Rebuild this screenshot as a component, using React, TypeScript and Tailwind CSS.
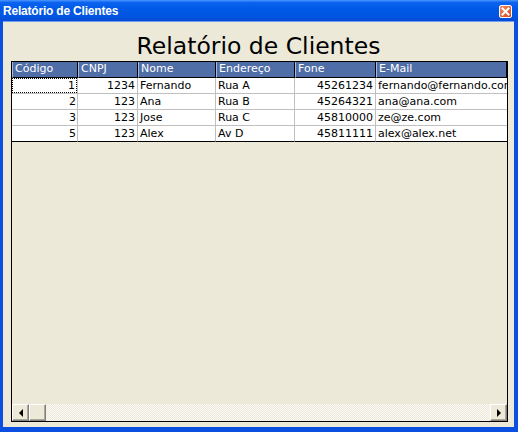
import React from 'react'

type Row = { codigo: number; cnpj: number; nome: string; endereco: string; fone: string; email: string }

const rows: Row[] = [
  { codigo: 1, cnpj: 1234, nome: 'Fernando', endereco: 'Rua A', fone: '45261234', email: 'fernando@fernando.com' },
  { codigo: 2, cnpj: 123, nome: 'Ana', endereco: 'Rua B', fone: '45264321', email: 'ana@ana.com' },
  { codigo: 3, cnpj: 123, nome: 'Jose', endereco: 'Rua C', fone: '45810000', email: 'ze@ze.com' },
  { codigo: 5, cnpj: 123, nome: 'Alex', endereco: 'Av D', fone: '45811111', email: 'alex@alex.net' },
]

const headers = [
  { label: 'Código', w: 'w-[66px]' },
  { label: 'CNPJ', w: 'w-[60px]' },
  { label: 'Nome', w: 'w-[78px]' },
  { label: 'Endereço', w: 'w-[79px]' },
  { label: 'Fone', w: 'w-[81px]' },
  { label: 'E-Mail', w: 'flex-1' },
]

function ScrollButton({ dir }: { dir: 'left' | 'right' }) {
  return (
    <div className="w-[17px] h-[17px] shrink-0 bg-[#ece9d8] border border-t-white border-l-white border-r-[#808080] border-b-[#808080] shadow-[inset_-1px_-1px_0_#aca899] flex items-center justify-center">
      {dir === 'left' ? (
        <span className="block w-0 h-0 border-y-[4px] border-y-transparent border-r-[4px] border-r-black" />
      ) : (
        <span className="block w-0 h-0 border-y-[4px] border-y-transparent border-l-[4px] border-l-black" />
      )}
    </div>
  )
}

export default function App() {
  return (
    <div className="w-[518px] h-[432px] flex flex-col bg-[#0b4fe0] font-['DejaVu_Sans',sans-serif]">
      {/* Title bar */}
      <div className="h-[21px] shrink-0 flex items-center pl-[3px] pr-[6px] bg-[linear-gradient(to_bottom,#4a95ff_0%,#0a64f0_12%,#0058e6_45%,#0054e0_80%,#0a4ad4_100%)]">
        <span className="text-white font-bold text-[12px] tracking-[-0.2px] font-['Liberation_Sans',Arial,sans-serif] leading-none pt-[1px]">
          Relatório de Clientes
        </span>
        <div className="ml-auto mt-[1px] w-[13px] h-[13px] rounded-[2px] border border-white bg-[linear-gradient(135deg,#f08a62,#d8451c)] flex items-center justify-center">
          <svg width="9" height="9" viewBox="0 0 9 9">
            <path d="M1.5 1.5 L7.5 7.5 M7.5 1.5 L1.5 7.5" stroke="white" strokeWidth="2" strokeLinecap="square" />
          </svg>
        </div>
      </div>

      {/* Client area */}
      <div className="flex-1 ml-[3px] mr-[4px] mb-[5px] bg-[#ece9d8] flex flex-col border-t border-t-[#6f9ef5]">
        <div className="h-[39px] shrink-0 flex justify-center pt-[7px]">
          <span className="text-[23.5px] leading-normal text-black">Relatório de Clientes</span>
        </div>

        <div className="flex-1 ml-[8px] mr-[6px] mb-[5px] border border-black flex flex-col min-h-0">
          {/* Header */}
          <div className="flex h-[16px] shrink-0 text-[11px] leading-[14px] text-white">
            {headers.map((h) => (
              <div
                key={h.label}
                className={`${h.w} bg-[#4f6da6] border-r border-b border-r-black border-b-black border-l border-l-[#a9b9d6] pl-[2px] overflow-hidden whitespace-nowrap`}
              >
                {h.label}
              </div>
            ))}
          </div>

          {/* Rows */}
          {rows.map((r, i) => {
            const last = i === rows.length - 1
            const bb = last ? 'border-b-black' : 'border-b-[#c0c0c0]'
            const cell = `h-[16px] bg-white border-r border-r-[#c0c0c0] border-b ${bb} overflow-hidden whitespace-nowrap`
            return (
              <div key={r.codigo} className="flex shrink-0 text-[11px] leading-[15px] text-black">
                <div className={`w-[66px] ${cell}`}>
                  <div className={`h-full text-right pr-[1px] ${i === 0 ? 'border border-dotted border-black leading-[13px]' : ''}`}>
                    {r.codigo}
                  </div>
                </div>
                <div className={`w-[60px] ${cell} text-right pr-[2px]`}>{r.cnpj}</div>
                <div className={`w-[78px] ${cell} pl-[2px]`}>{r.nome}</div>
                <div className={`w-[79px] ${cell} pl-[2px]`}>{r.endereco}</div>
                <div className={`w-[81px] ${cell} text-right pr-[2px]`}>{r.fone}</div>
                <div className={`flex-1 ${cell} border-r-0 pl-[2px]`}>{r.email}</div>
              </div>
            )
          })}

          <div className="flex-1" />

          {/* Horizontal scrollbar */}
          <div className="h-[17px] shrink-0 flex bg-[repeating-conic-gradient(#ebe8da_0_25%,#fbfaf6_0_50%)] bg-size-[2px_2px]">
            <ScrollButton dir="left" />
            <div className="w-[17px] h-[17px] shrink-0 bg-[#ece9d8] border border-t-white border-l-white border-r-[#808080] border-b-[#808080] shadow-[inset_-1px_-1px_0_#aca899]" />
            <div className="flex-1" />
            <ScrollButton dir="right" />
          </div>
        </div>
      </div>
    </div>
  )
}
